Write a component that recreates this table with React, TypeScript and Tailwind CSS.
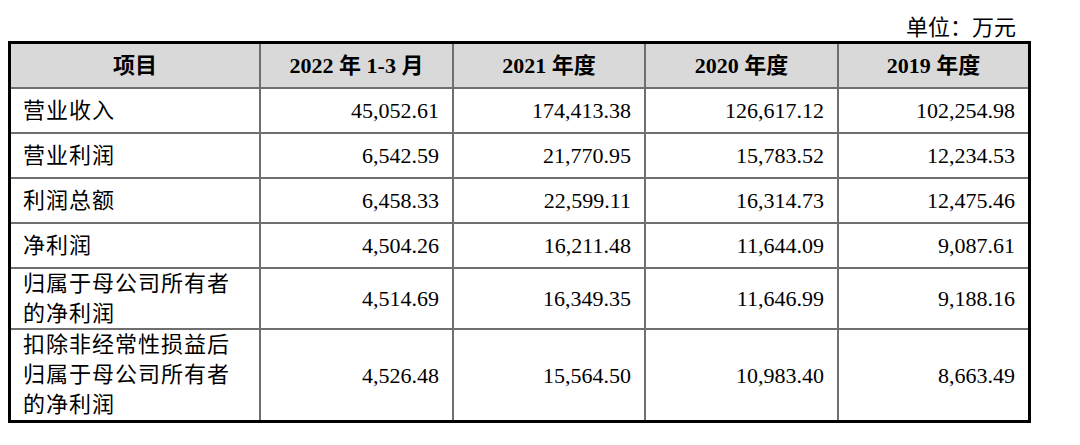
import React from "react";

const rows: { label: string[]; vals: string[]; h: string }[] = [
  { label: ["营业收入"], vals: ["45,052.61", "174,413.38", "126,617.12", "102,254.98"], h: "h-[45px]" },
  { label: ["营业利润"], vals: ["6,542.59", "21,770.95", "15,783.52", "12,234.53"], h: "h-[45px]" },
  { label: ["利润总额"], vals: ["6,458.33", "22,599.11", "16,314.73", "12,475.46"], h: "h-[45px]" },
  { label: ["净利润"], vals: ["4,504.26", "16,211.48", "11,644.09", "9,087.61"], h: "h-[45px]" },
  { label: ["归属于母公司所有者", "的净利润"], vals: ["4,514.69", "16,349.35", "11,646.99", "9,188.16"], h: "h-[61px]" },
  { label: ["扣除非经常性损益后", "归属于母公司所有者", "的净利润"], vals: ["4,526.48", "15,564.50", "10,983.40", "8,663.49"], h: "h-[90px]" },
];

const headers = ["项目", "2022 年 1-3 月", "2021 年度", "2020 年度", "2019 年度"];

export default function App() {
  return (
    <div
      className="w-[1080px] h-[445px] bg-white text-black text-[22px]"
      style={{ fontFamily: '"Liberation Serif", "Noto Sans CJK SC", serif' }}
    >
      <div className="ml-[8px] w-[1023px] pt-[14px]">
        <div className="h-[27px] leading-[27px] text-right pr-[15px]">单位：万元</div>
        <div className="border-[3px] border-black">
          <div className="grid grid-cols-[250px_193px_192px_193px_1fr]">
            {headers.map((h, i) => (
              <div
                key={h}
                className={`h-[45px] bg-[#d9d9d9] font-bold flex items-center justify-center border-b-2 border-[#6f6f6f] ${
                  i < 4 ? "border-r-2" : ""
                }`}
              >
                {h}
              </div>
            ))}
            {rows.map((r, ri) => {
              const last = ri === rows.length - 1;
              return (
                <React.Fragment key={ri}>
                  <div
                    className={`${r.h} flex flex-col justify-center pl-[12px] leading-[30px] tracking-[1px] border-r-2 border-[#6f6f6f] ${
                      last ? "" : "border-b-2"
                    }`}
                  >
                    {r.label.map((l) => (
                      <div key={l}>{l}</div>
                    ))}
                  </div>
                  {r.vals.map((v, vi) => (
                    <div
                      key={vi}
                      className={`${r.h} flex items-center justify-end pr-[13px] border-[#6f6f6f] ${
                        vi < 3 ? "border-r-2" : ""
                      } ${last ? "" : "border-b-2"}`}
                    >
                      {v}
                    </div>
                  ))}
                </React.Fragment>
              );
            })}
          </div>
        </div>
      </div>
    </div>
  );
}
